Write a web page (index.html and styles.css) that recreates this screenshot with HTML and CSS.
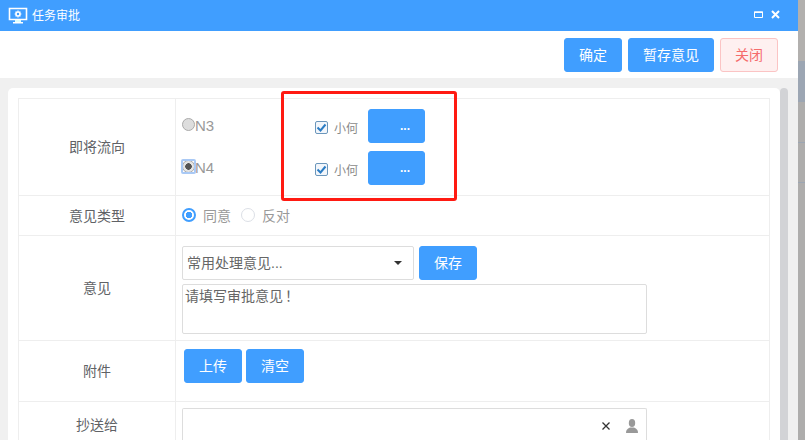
FILE: index.html
```html
<!DOCTYPE html>
<html lang="zh">
<head>
<meta charset="utf-8">
<title>任务审批</title>
<link rel="stylesheet" href="styles.css">
</head>
<body>
<div class="page">
  <div class="dialog">
    <header class="titlebar">
      <svg class="title-icon" width="20" height="17" viewBox="0 0 20 17"><path d="M1.500 1.500h17v11h-17z" fill="none" stroke="#fff" stroke-width="1.600"/><path d="M5 15h10v1.500H5z" fill="#fff"/><path d="M7 13h6v2H7z" fill="#dff"/><circle cx="10" cy="7" r="2" fill="none" stroke="#fff" stroke-width="1.600"/><path d="M10 3.600v1.200M10 9.200v1.200M6.600 7h1.200M12.200 7h1.200M7.600 4.600l.8.8M11.600 8.600l.8.8M12.400 4.600l-.8.8M8.400 8.600l-.8.8" stroke="#fff" stroke-width="1.200"/></svg>
      <span class="title-text">任务审批</span>
      <span class="win-controls">
        <svg width="9" height="7" viewBox="0 0 9 7"><path d="M.5 1h8v5.500h-8z" fill="none" stroke="#fff"/><path d="M0 .5h9v1.500H0z" fill="#fff"/></svg>
        <svg width="9" height="9" viewBox="0 0 9 9"><path d="M1 1l7 7M8 1L1 8" stroke="#fff" stroke-width="2"/></svg>
      </span>
    </header>
    <div class="toolbar">
      <button class="btn">确定</button>
      <button class="btn">暂存意见</button>
      <button class="btn btn-danger">关闭</button>
    </div>
    <div class="content">
      <div class="card">
        <table class="form">
          <colgroup><col class="col-label"><col></colgroup>
          <tr class="row-flow">
            <td class="label">即将流向</td>
            <td>
              <div class="flow-line">
                <span class="native-radio"></span><span class="node">N3</span>
                <span class="check"><svg width="13" height="13" viewBox="0 0 13 13"><rect x=".5" y=".5" width="12" height="12" rx="1.500" fill="#f2f6fb" stroke="#6b96bb"/><path d="M2.500 6.500l3 3 5-6" fill="none" stroke="#2b7cc4" stroke-width="2"/></svg></span>
                <span class="person">小何</span>
                <button class="btn btn-dots">...</button>
              </div>
              <div class="flow-line">
                <span class="native-radio focused"></span><span class="node">N4</span>
                <span class="check"><svg width="13" height="13" viewBox="0 0 13 13"><rect x=".5" y=".5" width="12" height="12" rx="1.500" fill="#f2f6fb" stroke="#6b96bb"/><path d="M2.500 6.500l3 3 5-6" fill="none" stroke="#2b7cc4" stroke-width="2"/></svg></span>
                <span class="person">小何</span>
                <button class="btn btn-dots">...</button>
              </div>
            </td>
          </tr>
          <tr class="row-type">
            <td class="label">意见类型</td>
            <td>
              <div class="radios">
                <span class="radio on"></span><span class="radio-text">同意</span>
                <span class="radio"></span><span class="radio-text">反对</span>
              </div>
            </td>
          </tr>
          <tr class="row-opinion">
            <td class="label">意见</td>
            <td>
              <div class="select-line">
                <div class="select"><span>常用处理意见...</span><i class="caret"></i></div>
                <button class="btn">保存</button>
              </div>
              <div class="textarea">请填写审批意见<span class="fullwidth">！</span></div>
            </td>
          </tr>
          <tr class="row-attach">
            <td class="label">附件</td>
            <td>
              <div class="attach-line">
                <button class="btn">上传</button>
                <button class="btn">清空</button>
              </div>
            </td>
          </tr>
          <tr class="row-cc">
            <td class="label">抄送给</td>
            <td>
              <div class="picker">
                <svg width="8" height="8" viewBox="0 0 8 8"><path d="M.5.5l7 7M7.500.5l-7 7" stroke="#333" stroke-width="1.300"/></svg>
                <svg width="12" height="14" viewBox="0 0 12 14"><ellipse cx="6" cy="4" rx="3.200" ry="4" fill="#999"/><path d="M0 14c0-3 1-4 4-5.500h4c3 1.500 4 2.500 4 5.500z" fill="#999"/></svg>
              </div>
            </td>
          </tr>
        </table>
      </div>
      <div class="scrollbar"></div>
    </div>
    <div class="highlight"></div>
  </div>
  <div class="backdrop"></div>
</div>
</body>
</html>
```
FILE: styles.css
```css
* { box-sizing: border-box; }
html, body { margin: 0; height: 100%; overflow: hidden; }
body { font-family: "Liberation Sans", "Noto Sans CJK SC", sans-serif; font-size: 14px; color: #606266; }
.page { display: flex; width: 805px; height: 440px; overflow: hidden; }
.dialog { position: relative; width: 798px; height: 440px; display: flex; flex-direction: column; flex: none; background: #fff; }
.backdrop {
  flex: 1;
  background: linear-gradient(to bottom, #b2b0ae 0, #b2b0ae 61px, #9ca6b3 61px, #9ca6b3 102px, #aeadac 102px, #aeadac 142px, #9ca6b3 142px, #9ca6b3 143px, #aeadac 143px, #aeadac 182px, #9ca6b3 182px, #9ca6b3 183px, #aeadac 183px);
}
.titlebar { height: 31px; background: #409eff; display: flex; align-items: center; padding: 0 18px 0 8px; color: #fff; flex: none; }
.title-icon { margin-right: 4px; margin-top: -1px; }
.title-text { font-size: 12px; margin-top: -2px; }
.win-controls { margin-left: auto; display: flex; align-items: center; gap: 8px; margin-top: -3px; }
.toolbar { height: 47px; display: flex; justify-content: flex-end; align-items: flex-start; gap: 6px; padding: 7px 20px 0 0; flex: none; }
.btn { height: 34px; min-width: 58px; padding: 0 14px; background: #409eff; color: #fff; border: 1px solid #409eff; border-radius: 3px; font: inherit; font-size: 14px; line-height: 1; }
.btn-danger { background: #fef0f0; border-color: #fbc4c4; color: #f56c6c; }
.content { flex: 1; min-height: 0; background: #f0f0f0; display: flex; padding: 10px 10px 0 8px; overflow: hidden; }
.card { width: 772px; background: #fff; border-radius: 5px 5px 0 0; padding: 10px 10px 0; flex: none; }
.scrollbar { width: 8px; background: #d2d3d6; border-radius: 4px 4px 0 0; flex: none; }
.form { width: 752px; border-collapse: collapse; table-layout: fixed; }
.form td { border: 1px solid #eee; padding: 0; vertical-align: top; }
.col-label { width: 157px; }
.form td.label { text-align: center; vertical-align: middle; padding: 0 0 2px; }
.row-flow { height: 97px; }
.row-flow td { padding: 10px 0 0 6px; }
.flow-line { display: flex; align-items: center; height: 34px; margin-bottom: 8px; }
.native-radio { position: relative; width: 13px; height: 13px; margin-bottom: 4px; border-radius: 50%; border: 1px solid #aaa; background: #ddd; flex: none; }
.native-radio.focused { background: radial-gradient(circle, #555 0, #555 3px, #e4e4e4 3.500px); }
.native-radio.focused::after { content: ""; position: absolute; inset: -2px; border: 2px solid #a9c9f5; border-radius: 2px; }
.node { color: #999; font-size: 15px; width: 120px; margin-bottom: 2px; flex: none; }
.check { display: flex; flex: none; margin-top: 3px; }
.person { font-size: 12px; color: #8a8a8a; margin-left: 6px; margin-top: 2px; width: 34px; flex: none; }
.btn-dots { width: 57px; padding: 0 0 0 17px; min-width: 0; font-weight: bold; font-size: 12px; }
.row-type { height: 40px; }
.radios { display: flex; align-items: center; height: 38px; padding-left: 6px; }
.radio { width: 14px; height: 14px; border-radius: 50%; border: 1px solid #dcdfe6; background: #fff; flex: none; }
.radio.on { border: 2px solid #409eff; background: radial-gradient(circle, #409eff 0, #409eff 3px, #fff 3.500px); }
.radio-text { color: #999; margin-left: 7px; width: 38px; flex: none; }
.row-opinion { height: 105px; }
.row-opinion td { padding: 10px 0 0 6px; }
.select-line { display: flex; gap: 5px; }
.select { width: 232px; height: 34px; border: 1px solid #ddd; border-radius: 2px; display: flex; align-items: center; justify-content: space-between; padding: 0 11px 2px 4px; color: #666; }
.caret { width: 0; height: 0; border: 4px solid transparent; border-top-color: #333; border-bottom: 0; margin-top: 2px; }
.textarea { width: 465px; height: 50px; margin-top: 4px; border: 1px solid #ddd; border-radius: 2px; padding: 1px 2px; color: #666; line-height: 18px; }
.fullwidth { font-family: "Noto Sans CJK TC", sans-serif; margin-left: 2px; }
.row-attach { height: 61px; }
.row-attach td { padding: 8px 0 0 8px; }
.attach-line { display: flex; gap: 4px; }
.row-cc { height: 50px; }
.row-cc td { padding: 6px 0 0 6px; }
.form .row-cc td.label { padding: 0 0 6px; }
.picker { width: 465px; height: 44px; border: 1px solid #ddd; border-bottom: 0; border-radius: 2px 2px 0 0; display: flex; align-items: center; justify-content: flex-end; gap: 16px; padding: 0 8px 10px 0; }
.highlight { position: absolute; left: 281px; top: 91px; width: 176px; height: 110px; border: 3px solid #ff1a12; border-radius: 3px; pointer-events: none; }
```
